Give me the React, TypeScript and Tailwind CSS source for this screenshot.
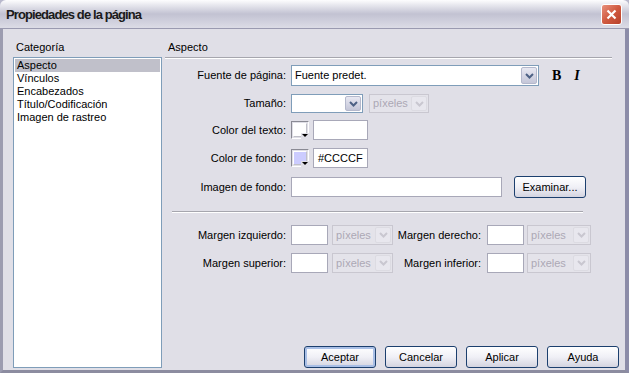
import React from 'react';

const FONT = { fontFamily: '"Liberation Sans", Arial, sans-serif' };

function Chevron({ disabled }: { disabled?: boolean }) {
  return (
    <svg width="9" height="6" viewBox="0 0 9 6">
      <path d="M1 1 L4.5 4.5 L8 1" fill="none" stroke={disabled ? '#c9c7d0' : '#4d6185'} strokeWidth="2" />
    </svg>
  );
}

function Select({ w, h, text, disabled }: { w: string; h: string; text?: string; disabled?: boolean }) {
  return (
    <div
      className={`${w} ${h} flex items-stretch border ${
        disabled ? 'border-[#c9c7d0] bg-[#e4e3ea]' : 'border-[#7f9db9] bg-white'
      }`}
    >
      <div className={`flex-1 flex items-center pl-[3px] ${disabled ? 'text-[#aca8b5]' : 'text-black'}`}>
        {text}
      </div>
      <div
        className={`w-[16px] m-[1px] flex items-center justify-center rounded-[2px] border ${
          disabled
            ? 'border-[#dcdbe2] bg-[#e8e7ee]'
            : 'border-[#b4b8cc] bg-gradient-to-b from-[#e8e8f2] to-[#c4c6d8]'
        }`}
      >
        <Chevron disabled={disabled} />
      </div>
    </div>
  );
}

function Input({ w, h = 'h-[20px]', value }: { w: string; h?: string; value?: string }) {
  return (
    <div className={`${w} ${h} border border-[#a8a8b8] bg-white flex items-center pl-[4px] overflow-hidden whitespace-nowrap`}>
      {value}
    </div>
  );
}

function Swatch({ color }: { color: string }) {
  return (
    <div className="relative w-[18px] h-[18px] border border-t-[#8a8a94] border-l-[#8a8a94] border-r-[#ffffff] border-b-[#ffffff]">
      <div className="absolute inset-[1px] border border-t-[#ffffff] border-l-[#ffffff] border-r-[#c0c0c8] border-b-[#c0c0c8]" style={{ background: color }} />
      <div className="absolute right-[-1px] bottom-[-1px] w-[8px] h-[6px] bg-[#e0dfe7] flex items-center justify-center">
        <svg width="6" height="4" viewBox="0 0 6 4">
          <path d="M0 0 H6 L3 3 Z" fill="#000" />
        </svg>
      </div>
    </div>
  );
}

function Button({ label, primary }: { label: string; primary?: boolean }) {
  return (
    <div
      className={`w-[72px] h-[22px] rounded-[3px] border border-[#1c3f6e] flex items-center justify-center bg-gradient-to-b from-[#ffffff] via-[#f0f0f6] to-[#d4d4e0] ${
        primary ? 'shadow-[inset_0_0_0_2px_#a9bfe6]' : ''
      }`}
    >
      {label}
    </div>
  );
}

function Row({ label, children, className = '' }: { label: string; children: React.ReactNode; className?: string }) {
  return (
    <div className={`flex items-center ${className}`}>
      <div className="w-[121px] text-right">{label}</div>
      <div className="ml-[5px] flex items-center">{children}</div>
    </div>
  );
}

const CATEGORIES = ['Aspecto', 'Vínculos', 'Encabezados', 'Título/Codificación', 'Imagen de rastreo'];

export default function App() {
  return (
    <div className="w-[629px] h-[373px] flex flex-col bg-[#b8b8cc] text-[11px] leading-[13px] text-black" style={FONT}>
      {/* Title bar */}
      <div className="h-[29px] flex items-center justify-between rounded-t-[6px] bg-gradient-to-b from-[#fdfdfe] via-[#c2c2d2] to-[#dcdce6] border-b border-[#9a9ab0] pl-[6px] pr-[7px]">
        <span className="text-[13px] font-bold tracking-[-0.9px] text-[#1a1a1a]">Propiedades de la página</span>
        <div className="w-[21px] h-[21px] rounded-[3px] border border-white bg-gradient-to-br from-[#e8907c] via-[#d05a40] to-[#b8402a] flex items-center justify-center">
          <svg width="11" height="11" viewBox="0 0 11 11">
            <path d="M1.5 1.5 L9.5 9.5 M9.5 1.5 L1.5 9.5" stroke="#fff" strokeWidth="2.2" />
          </svg>
        </div>
      </div>

      {/* Body */}
      <div className="flex-1 flex bg-[#e0dfe7] border-l-[3px] border-r-[4px] border-b-[3px] border-l-[#9c9cb0] border-r-[#8c8ca8] border-b-[#8c8ca0] pl-[10px] pt-[12px] pb-[2px] pr-[6px]">
        {/* Category column */}
        <div className="w-[149px] flex flex-col">
          <div className="h-[13px] pl-[3px]">Categoría</div>
          <div className="mt-[3px] flex-1 border border-[#7f9db9] bg-white p-[1px]">
            {CATEGORIES.map((c, i) => (
              <div key={c} className={`h-[13px] pl-[2px] ${i === 0 ? 'bg-[#c0c0ca]' : ''}`}>
                {c}
              </div>
            ))}
          </div>
        </div>

        {/* Settings column */}
        <div className="ml-[3px] flex-1 flex flex-col">
          <div className="h-[13px] pl-[3px]">Aspecto</div>
          <div className="mt-[3px] w-[447px] border-t border-t-[#a6a6ae] border-b border-b-white" />

          <Row label="Fuente de página:" className="mt-[6px] h-[21px]">
            <Select w="w-[248px]" h="h-[21px]" text="Fuente predet." />
            <span className="ml-[13px] font-bold text-[14px]" style={{ fontFamily: '"Liberation Serif", serif' }}>B</span>
            <span className="ml-[13px] font-bold italic text-[14px]" style={{ fontFamily: '"Liberation Serif", serif' }}>I</span>
          </Row>

          <Row label="Tamaño:" className="mt-[8px] h-[19px]">
            <Select w="w-[72px]" h="h-[19px]" />
            <div className="ml-[6px]">
              <Select w="w-[60px]" h="h-[19px]" text="píxeles" disabled />
            </div>
          </Row>

          <Row label="Color del texto:" className="mt-[7px] h-[20px]">
            <Swatch color="#ffffff" />
            <div className="ml-[4px]">
              <Input w="w-[55px]" />
            </div>
          </Row>

          <Row label="Color de fondo:" className="mt-[8px] h-[20px]">
            <Swatch color="#ccccff" />
            <div className="ml-[4px]">
              <Input w="w-[55px]" value="#CCCCF" />
            </div>
          </Row>

          <Row label="Imagen de fondo:" className="mt-[9px] h-[20px]">
            <Input w="w-[211px]" />
            <div className="ml-[12px]">
              <Button label="Examinar..." />
            </div>
          </Row>

          <div className="mt-[14px] ml-[7px] w-[411px] border-t border-t-[#a6a6ae] border-b border-b-white" />

          <Row label="Margen izquierdo:" className="mt-[12px] h-[20px]">
            <Input w="w-[37px]" />
            <div className="ml-[4px]">
              <Select w="w-[61px]" h="h-[20px]" text="píxeles" disabled />
            </div>
            <div className="w-[88px] text-right">Margen derecho:</div>
            <div className="ml-[6px]">
              <Input w="w-[37px]" />
            </div>
            <div className="ml-[3px]">
              <Select w="w-[64px]" h="h-[20px]" text="píxeles" disabled />
            </div>
          </Row>

          <Row label="Margen superior:" className="mt-[8px] h-[20px]">
            <Input w="w-[37px]" />
            <div className="ml-[4px]">
              <Select w="w-[61px]" h="h-[20px]" text="píxeles" disabled />
            </div>
            <div className="w-[88px] text-right">Margen inferior:</div>
            <div className="ml-[6px]">
              <Input w="w-[37px]" />
            </div>
            <div className="ml-[3px]">
              <Select w="w-[64px]" h="h-[20px]" text="píxeles" disabled />
            </div>
          </Row>

          <div className="mt-auto flex justify-end gap-[9px]">
            <Button label="Aceptar" primary />
            <Button label="Cancelar" />
            <Button label="Aplicar" />
            <Button label="Ayuda" />
          </div>
        </div>
      </div>
    </div>
  );
}
